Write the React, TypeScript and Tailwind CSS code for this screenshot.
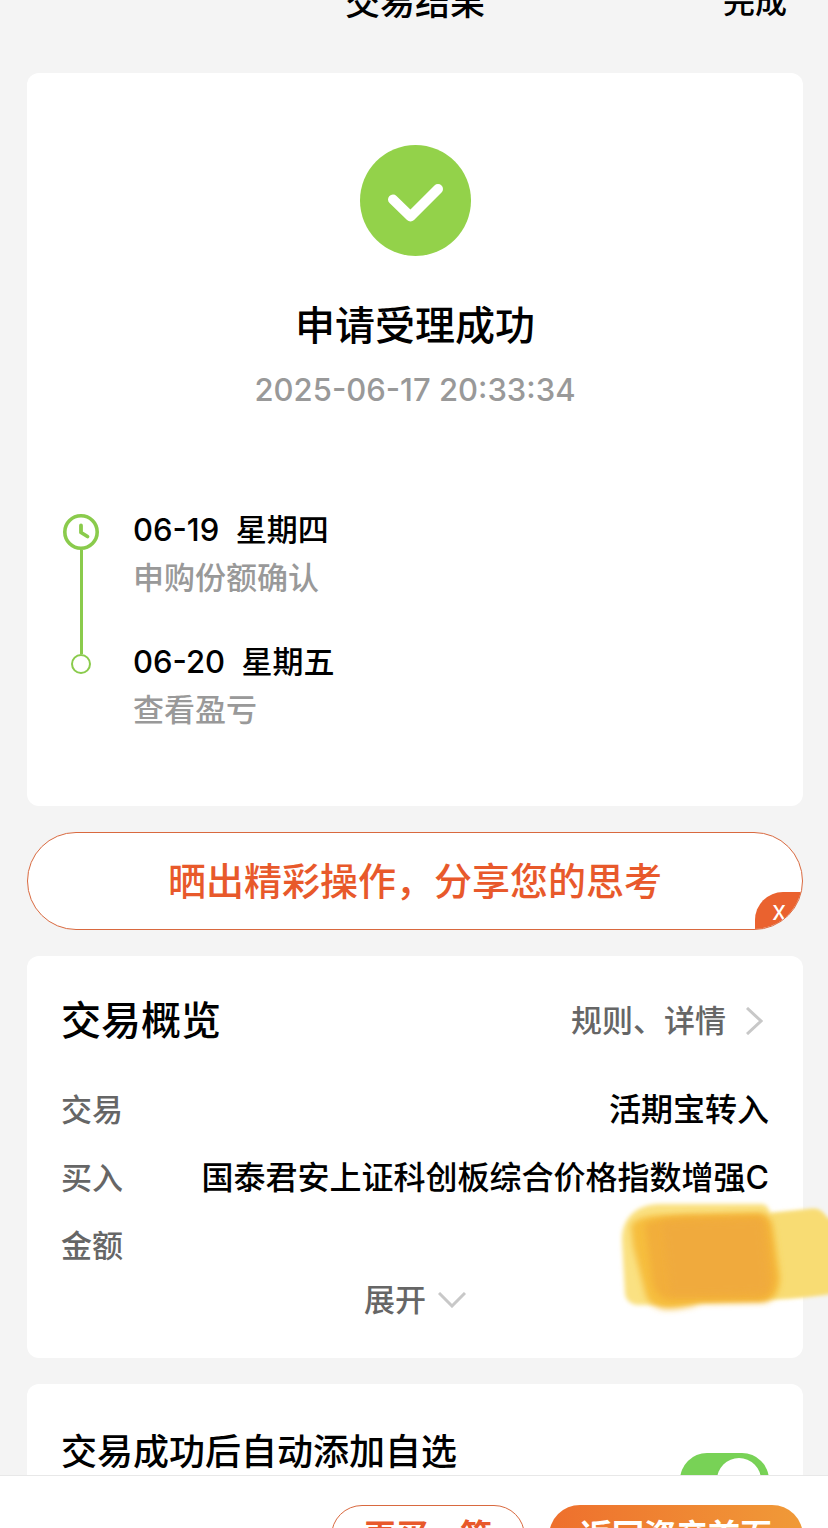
import { useState } from "react";
import type { ReactNode } from "react";

const steps = [
  { date: "06-19  星期四", text: "申购份额确认" },
  { date: "06-20  星期五", text: "查看盈亏" },
];

function Card({ children, className = "" }: { children: ReactNode; className?: string }) {
  return <section className={`rounded-xl bg-white px-[34px] ${className}`}>{children}</section>;
}

function Row({ label, children }: { label: string; children: ReactNode }) {
  return (
    <div className="flex h-[68px] items-center justify-between">
      <dt className="text-[31px] text-[#666]">{label}</dt>
      <dd className="relative text-[32px] text-black">{children}</dd>
    </div>
  );
}

function SuccessIcon() {
  return (
    <svg width="111" height="111" viewBox="0 0 111 111" aria-hidden="true">
      <circle cx="55.5" cy="55.5" r="55.5" fill="#93d24a" />
      <path
        d="M33 54.5 50.5 71.5 78 44"
        fill="none"
        stroke="#fff"
        strokeWidth="10"
        strokeLinecap="round"
        strokeLinejoin="round"
      />
    </svg>
  );
}

function ClockIcon() {
  return (
    <svg width="40" height="36" viewBox="0 0 40 36" fill="none" stroke="#8acb4c" aria-hidden="true">
      <circle cx="20" cy="18" r="16.2" strokeWidth="3.6" />
      <path d="M20 11.5V18.5L26.5 22.5" strokeWidth="3.8" strokeLinecap="round" strokeLinejoin="round" />
    </svg>
  );
}

// marker strokes that hide the amount
function Scribble() {
  return (
    <svg
      width="230"
      height="124"
      viewBox="0 0 230 124"
      className="absolute -right-[76px] -top-[50px] max-w-none"
      aria-hidden="true"
    >
      <defs>
        <filter id="soft" x="-10%" y="-10%" width="120%" height="120%">
          <feGaussianBlur stdDeviation="2" />
        </filter>
        <filter id="softer" x="-10%" y="-10%" width="120%" height="120%">
          <feGaussianBlur stdDeviation="3" />
        </filter>
      </defs>
      <path
        d="M7 46C6 24 20 8 45 8L146 8Q153 8 155 17L199 13Q208 13 213 26L213 95Q190 102 153 103L28 109Q12 110 10 98Z"
        fill="#fae182"
        filter="url(#soft)"
      />
      <path
        d="M156 19 198 14Q206 14 211 22L230 24V96Q200 101 156 102Z"
        fill="#f8dc73"
        filter="url(#soft)"
      />
      <path
        d="M16 30Q20 20 48 19L146 17Q156 18 158 30L165 80Q165 104 148 106L86 107Q70 113 50 113 34 110 31 100L18 50Z"
        fill="#f6bd3c"
        filter="url(#softer)"
      />
      <path
        d="M30 28Q50 20 80 20L145 19Q153 22 154 34L160 82Q158 102 146 104L56 104Q42 102 38 88Z"
        fill="#f2ae3b"
        filter="url(#softer)"
      />
      <path d="M48 27 146 24 153 94Q140 98 56 98Z" fill="#f0aa3c" filter="url(#softer)" />
    </svg>
  );
}

function App() {
  const [showShare, setShowShare] = useState(true);
  const [autoAdd, setAutoAdd] = useState(true);

  return (
    <div className="flex h-screen w-full flex-col overflow-hidden bg-[#f4f4f4] font-['Inter','Noto_Sans_CJK_SC',sans-serif] font-medium text-black">
      <main className="flex min-h-0 flex-1 flex-col overflow-hidden pl-[27px] pr-[25px]">
        <header className="-mt-6 mb-[47px] grid h-[50px] shrink-0 grid-cols-3 items-center">
          <h1 className="col-start-2 text-center text-[35px] font-medium">交易结果</h1>
          <button type="button" className="justify-self-end pr-4 text-[32px]">
            完成
          </button>
        </header>

        <div className="flex flex-col gap-[26px]">
          <Card className="pb-[72px] pt-[72px]">
            <div className="flex flex-col items-center">
              <SuccessIcon />
              <h2 className="mt-[42px] text-[40px] font-medium leading-[56px]">申请受理成功</h2>
              <time className="mt-3 text-[31px] leading-[48px] text-[#999]">
                2025-06-17 20:33:34
              </time>
            </div>
            <div className="mt-[92px] flex gap-8">
              <div className="flex flex-col items-center pb-[60px] pt-2">
                <ClockIcon />
                <div className="w-[3px] flex-1 bg-[#8acb4c]" />
                <div className="size-5 rounded-full border-2 border-[#8acb4c]" />
              </div>
              <ol className="flex flex-col gap-9 text-[31px] leading-[48px]">
                {steps.map((step) => (
                  <li key={step.date}>
                    <p className="whitespace-pre">{step.date}</p>
                    <p className="text-[#999]">{step.text}</p>
                  </li>
                ))}
              </ol>
            </div>
          </Card>

          {showShare && (
            <div className="relative h-[98px] overflow-hidden rounded-full border border-[#d9693f] bg-white">
              <button type="button" className="size-full text-[38px] text-[#e8592b]">
                晒出精彩操作，分享您的思考
              </button>
              <button
                type="button"
                aria-label="关闭"
                onClick={() => setShowShare(false)}
                className="absolute -bottom-px -right-px h-[38px] w-[48px] rounded-tl-[28px] bg-[#ea622f] text-[26px] font-normal leading-8 text-white"
              >
                x
              </button>
            </div>
          )}

          <Card className="pb-[38px] pt-[37px]">
            <div className="mb-[27px] flex items-center justify-between">
              <h2 className="text-[40px] font-medium leading-[56px]">交易概览</h2>
              <a href="#rules" className="flex items-center gap-5 pr-[6px] text-[31px] text-[#666]">
                规则、详情
                <svg width="17" height="28" viewBox="0 0 17 28" fill="none" aria-hidden="true">
                  <path d="M1 1 15 14 1 27" stroke="#c8c8c8" strokeWidth="3" />
                </svg>
              </a>
            </div>
            <dl>
              <Row label="交易">活期宝转入</Row>
              <Row label="买入">国泰君安上证科创板综合价格指数增强C</Row>
              <Row label="金额">
                <Scribble />
              </Row>
            </dl>
            <button
              type="button"
              className="mx-auto flex h-10 items-center gap-3 text-[31px] text-[#666]"
            >
              展开
              <svg width="28" height="16" viewBox="0 0 28 16" fill="none" aria-hidden="true">
                <path d="M1 1 14 14 27 1" stroke="#c8c8c8" strokeWidth="3" />
              </svg>
            </button>
          </Card>

          <Card className="flex items-start justify-between pb-10 pt-11">
            <label htmlFor="auto-add" className="text-[36px] leading-[48px]">
              交易成功后自动添加自选
            </label>
            <input
              id="auto-add"
              type="checkbox"
              role="switch"
              checked={autoAdd}
              onChange={(e) => setAutoAdd(e.target.checked)}
              className="mt-[25px] flex h-[54px] w-[89px] appearance-none items-center rounded-full bg-gray-300 px-2 before:size-[44px] before:rounded-full before:bg-white before:shadow-md checked:justify-end checked:bg-[#78d256]"
            />
          </Card>
        </div>
      </main>

      {/* the bar runs on below the fold */}
      <footer className="-mb-[68px] flex shrink-0 justify-end gap-6 border-t border-[#e8e8e8] bg-white py-[29px] pr-[25px] text-[32px]">
        <button
          type="button"
          className="h-[62px] rounded-full border border-[#d9693f] px-8 font-bold text-[#e8592b]"
        >
          再买一笔
        </button>
        <button
          type="button"
          className="h-[62px] rounded-full bg-linear-to-r from-[#ee6f2d] to-[#f09a38] px-[31px] font-semibold text-white"
        >
          返回资产首页
        </button>
      </footer>
    </div>
  );
}

export default App;
